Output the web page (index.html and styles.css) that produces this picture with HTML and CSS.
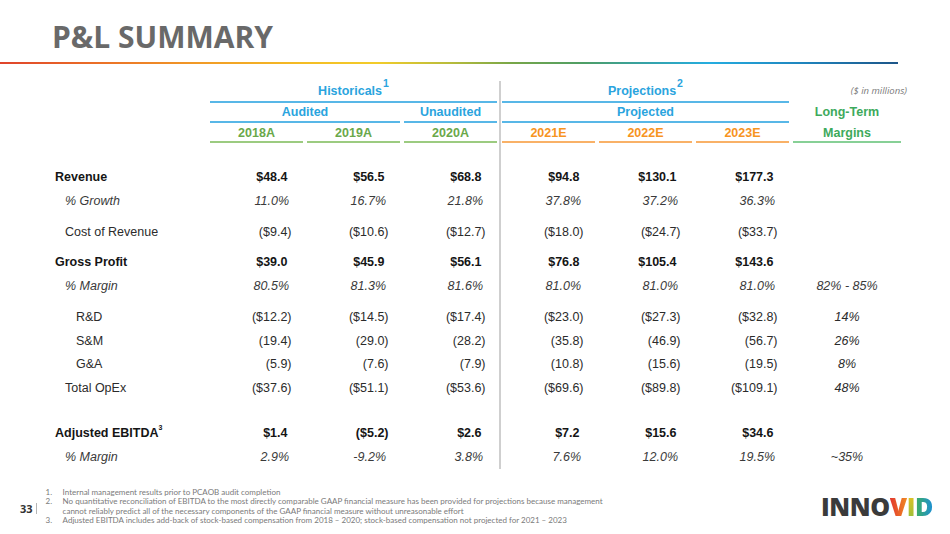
FILE: index.html
```html
<!DOCTYPE html>
<html lang="en">
<head>
<meta charset="utf-8">
<title>P&amp;L Summary</title>
<link rel="stylesheet" href="styles.css">
</head>
<body>
<div class="slide">
  <h1 class="title">P&amp;L SUMMARY</h1>
  <div class="rule"></div>

  <div class="pl">
    <div class="divider"></div>

    <div class="hd r1"></div>
    <div class="hd r1 blue span3 line-blue">Historicals<sup>1</sup></div>
    <div class="hd r1 blue span3 line-blue">Projections<sup>2</sup></div>
    <div class="hd r1 units">($ in millions)</div>

    <div class="hd r2"></div>
    <div class="hd r2 blue span2 line-blue">Audited</div>
    <div class="hd r2 blue line-blue">Unaudited</div>
    <div class="hd r2 blue span3 line-blue">Projected</div>
    <div class="hd r2 lt">Long-Term</div>

    <div class="hd r3"></div>
    <div class="hd r3 yr-a">2018A</div>
    <div class="hd r3 yr-a">2019A</div>
    <div class="hd r3 yr-a">2020A</div>
    <div class="hd r3 yr-e">2021E</div>
    <div class="hd r3 yr-e">2022E</div>
    <div class="hd r3 yr-e">2023E</div>
    <div class="hd r3 lt line-lt">Margins</div>

    <div class="row bold sp22">
      <div class="lbl">Revenue</div>
      <div class="v pos">$48.4</div><div class="v pos">$56.5</div><div class="v pos">$68.8</div>
      <div class="v pos">$94.8</div><div class="v pos">$130.1</div><div class="v pos">$177.3</div>
      <div class="m"></div>
    </div>
    <div class="row ital">
      <div class="lbl in1">% Growth</div>
      <div class="v">11.0%</div><div class="v">16.7%</div><div class="v">21.8%</div>
      <div class="v">37.8%</div><div class="v">37.2%</div><div class="v">36.3%</div>
      <div class="m"></div>
    </div>
    <div class="row sp7">
      <div class="lbl in1">Cost of Revenue</div>
      <div class="v">($9.4)</div><div class="v">($10.6)</div><div class="v">($12.7)</div>
      <div class="v">($18.0)</div><div class="v">($24.7)</div><div class="v">($33.7)</div>
      <div class="m"></div>
    </div>
    <div class="row bold sp6">
      <div class="lbl">Gross Profit</div>
      <div class="v pos">$39.0</div><div class="v pos">$45.9</div><div class="v pos">$56.1</div>
      <div class="v pos">$76.8</div><div class="v pos">$105.4</div><div class="v pos">$143.6</div>
      <div class="m"></div>
    </div>
    <div class="row ital">
      <div class="lbl in1">% Margin</div>
      <div class="v">80.5%</div><div class="v">81.3%</div><div class="v">81.6%</div>
      <div class="v">81.0%</div><div class="v">81.0%</div><div class="v">81.0%</div>
      <div class="m">82% - 85%</div>
    </div>
    <div class="row sp7">
      <div class="lbl in2">R&amp;D</div>
      <div class="v">($12.2)</div><div class="v">($14.5)</div><div class="v">($17.4)</div>
      <div class="v">($23.0)</div><div class="v">($27.3)</div><div class="v">($32.8)</div>
      <div class="m">14%</div>
    </div>
    <div class="row">
      <div class="lbl in2">S&amp;M</div>
      <div class="v">(19.4)</div><div class="v">(29.0)</div><div class="v">(28.2)</div>
      <div class="v">(35.8)</div><div class="v">(46.9)</div><div class="v">(56.7)</div>
      <div class="m">26%</div>
    </div>
    <div class="row short">
      <div class="lbl in2">G&amp;A</div>
      <div class="v">(5.9)</div><div class="v">(7.6)</div><div class="v">(7.9)</div>
      <div class="v">(10.8)</div><div class="v">(15.6)</div><div class="v">(19.5)</div>
      <div class="m">8%</div>
    </div>
    <div class="row">
      <div class="lbl in1">Total OpEx</div>
      <div class="v">($37.6)</div><div class="v">($51.1)</div><div class="v">($53.6)</div>
      <div class="v">($69.6)</div><div class="v">($89.8)</div><div class="v">($109.1)</div>
      <div class="m">48%</div>
    </div>
    <div class="row bold sp21">
      <div class="lbl">Adjusted EBITDA<sup>3</sup></div>
      <div class="v pos">$1.4</div><div class="v">($5.2)</div><div class="v pos">$2.6</div>
      <div class="v pos">$7.2</div><div class="v pos">$15.6</div><div class="v pos">$34.6</div>
      <div class="m"></div>
    </div>
    <div class="row ital">
      <div class="lbl in1">% Margin</div>
      <div class="v">2.9%</div><div class="v">-9.2%</div><div class="v">3.8%</div>
      <div class="v">7.6%</div><div class="v">12.0%</div><div class="v">19.5%</div>
      <div class="m">~35%</div>
    </div>
  </div>

  <footer class="foot">
    <div class="pg">33</div>
    <ol class="notes">
      <li><span class="n">1.</span><span>Internal management results prior to PCAOB audit completion</span></li>
      <li><span class="n">2.</span><span>No quantitative reconciliation of EBITDA to the most directly comparable GAAP financial measure has been provided for projections because management<br>cannot reliably predict all of the necessary components of the GAAP financial measure without unreasonable effort</span></li>
      <li><span class="n">3.</span><span>Adjusted EBITDA includes add-back of stock-based compensation from 2018 – 2020; stock-based compensation not projected for 2021 – 2023</span></li>
    </ol>
    <div class="logo">INNO<span class="lv">V</span><span class="li">I</span><span class="ld">D</span></div>
  </footer>
</div>
</body>
</html>
```
FILE: styles.css
```css
* { box-sizing: border-box; }

html, body {
  margin: 0;
  padding: 0;
  background: #ffffff;
}

.slide {
  width: 950px;
  height: 534px;
  overflow: hidden;
  display: flex;
  flex-direction: column;
  font-family: "Liberation Sans", Arial, sans-serif;
}

.title {
  margin: 22px 0 0 52px;
  font-family: "Open Sans", sans-serif;
  font-weight: 700;
  font-size: 30px;
  line-height: 30px;
  color: #696969;
  letter-spacing: 0;
}

.rule {
  margin-top: 10px;
  width: 898px;
  height: 2px;
  background: linear-gradient(to right,
    #df432b 0%,
    #ea6c27 10%,
    #f19a26 22%,
    #f4bd24 34%,
    #f2cc2a 42%,
    #b9bc3b 50%,
    #78a648 57%,
    #4e9e66 65%,
    #35a2a8 72%,
    #25ade0 79%,
    #1f86bf 89%,
    #1d5588 100%);
}

/* ---------- P&L table ---------- */
.pl {
  margin: 17px 0 0 55px;
  display: grid;
  grid-template-columns: 153px repeat(3, 97px) 1px repeat(3, 97px) 112px;
  font-size: 12.5px;
  color: #2b2b2b;
}

.divider {
  grid-column: 5;
  grid-row: 1 / 15;
  background: #cfcfcf;
  width: 1.5px;
}

.hd {
  margin: 0 2px;
  text-align: center;
  font-weight: 700;
  white-space: nowrap;
}
.hd.r1 { line-height: 20px; }
.hd.r2 { padding-top: 1px; line-height: 17px; }
.hd.r3 { padding-top: 3px; line-height: 15px; }

.span2 { grid-column: span 2; }
.span3 { grid-column: span 3; }

.blue { color: #2aa4de; }
.line-blue { border-bottom: 2px solid #58b7e7; }

.yr-a { color: #6aa84a; border-bottom: 2px solid #9ccb80; }
.yr-e { color: #f7941f; border-bottom: 2px solid #f9b167; }
.lt { color: #3daa5c; }
.line-lt { border-bottom: 2px solid #87d096; }

.hd sup {
  font-size: 10.5px;
  line-height: 0;
  vertical-align: 8px;
  margin-left: 1px;
}

.units {
  align-self: start;
  text-align: right;
  margin-right: -4px;
  font-family: "Open Sans", sans-serif;
  font-style: italic;
  font-weight: 400;
  font-size: 9.5px;
  line-height: 14px;
  color: #7a7a7a;
}

.row { display: contents; }
.row > div {
  line-height: 24px;
  white-space: nowrap;
}
.row.short > div { line-height: 23px; }
.row.sp22 > div { padding-top: 22px; }
.row.sp21 > div { padding-top: 21px; }
.row.sp7 > div { padding-top: 7px; }
.row.sp6 > div { padding-top: 6px; }

.row.bold > div { font-weight: 700; color: #151515; }
.row.ital > div { font-style: italic; color: #3a3a3a; }

.lbl { padding-left: 0; }
.lbl.in1 { padding-left: 10px; }
.lbl.in2 { padding-left: 21px; }

.lbl sup {
  font-size: 7px;
  line-height: 0;
  vertical-align: 7px;
}

.v {
  margin: 0 2px;
  text-align: right;
  padding-right: 11.5px;
}
.v.pos { padding-right: 15.5px; }
.row.ital .v { padding-right: 14px; }

.m {
  margin: 0 2px;
  text-align: center;
  font-style: italic;
}

/* ---------- footer ---------- */
.foot {
  margin-top: 19px;
  display: flex;
  align-items: center;
}

.pg {
  margin-left: 20px;
  padding-right: 3px;
  font-family: "Open Sans", sans-serif;
  font-weight: 700;
  font-size: 11px;
  line-height: 11px;
  color: #333;
  border-right: 1px solid #b5b5b5;
  margin-top: 3px;
}

.notes {
  margin: 0 0 0 9px;
  padding: 0;
  list-style: none;
  font-family: "Lato", sans-serif;
  font-size: 8px;
  line-height: 9.3px;
  color: #7a7a7a;
}
.notes li {
  display: flex;
  white-space: nowrap;
}
.notes .n {
  width: 17px;
  flex: none;
}

.logo {
  margin-left: auto;
  margin-right: 17px;
  font-family: "Open Sans", sans-serif;
  font-weight: 800;
  font-size: 25px;
  line-height: 25px;
  letter-spacing: -0.4px;
  color: #3b3b3b;
}
.logo span {
  -webkit-background-clip: text;
  background-clip: text;
  color: transparent;
}
.logo .lv { background-image: linear-gradient(to right, #e2372f, #f08a22); }
.logo .li { background-image: linear-gradient(to bottom, #f6c21f, #8cbf3d); }
.logo .ld { background-image: linear-gradient(to right, #3fae5f, #1c8fd6); }
```
